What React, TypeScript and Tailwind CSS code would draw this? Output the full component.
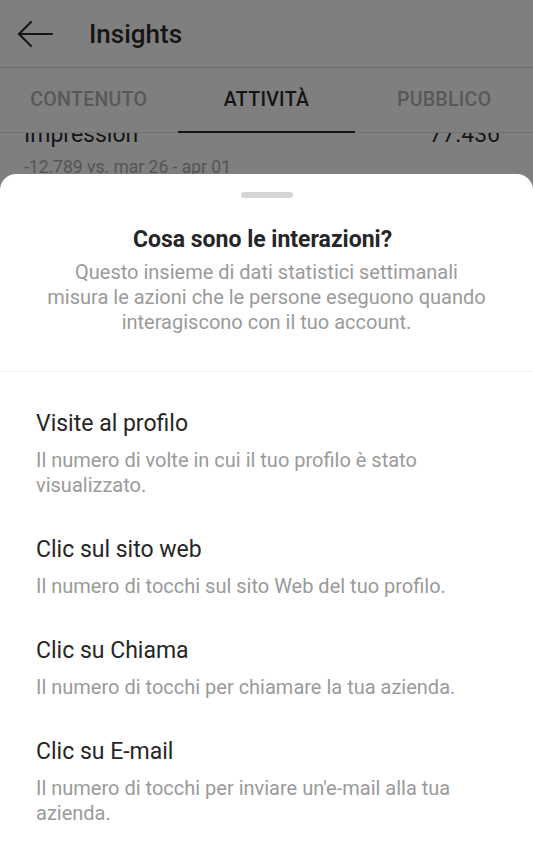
import React from "react";

const items = [
  {
    title: "Visite al profilo",
    lines: ["Il numero di volte in cui il tuo profilo è stato", "visualizzato."],
  },
  {
    title: "Clic sul sito web",
    lines: ["Il numero di tocchi sul sito Web del tuo profilo."],
  },
  {
    title: "Clic su Chiama",
    lines: ["Il numero di tocchi per chiamare la tua azienda."],
  },
  {
    title: "Clic su E-mail",
    lines: ["Il numero di tocchi per inviare un'e-mail alla tua", "azienda."],
  },
];

export default function App() {
  return (
    <div
      className="w-[533px] h-[850px] bg-[#7f7f7f] flex flex-col overflow-hidden"
      style={{ fontFamily: "Roboto, 'Noto Sans', sans-serif" }}
    >
      {/* Header */}
      <div className="h-[68px] flex items-center shrink-0 border-b border-[#6c6c6c]">
        <svg
          className="ml-[17px] w-[36px] h-[28px]"
          viewBox="0 0 36 28"
          fill="none"
          stroke="#151515"
          strokeWidth="2"
          strokeLinecap="round"
          strokeLinejoin="round"
        >
          <path d="M35 14H2" />
          <path d="M14 2L2 14L14 26" />
        </svg>
        <span className="ml-[36px] text-[26px] font-medium text-[#151515] leading-none">Insights</span>
      </div>

      {/* Tabs */}
      <div className="h-[65px] grid grid-cols-3 shrink-0 border-b border-[#727272]">
        <div className="flex items-center justify-center text-[19.5px] font-medium text-[#585858] tracking-[0.3px]">
          CONTENUTO
        </div>
        <div className="relative flex items-center justify-center text-[19.5px] font-medium text-[#141414] tracking-[0.3px]">
          ATTIVITÀ
          <div className="absolute left-0 right-0 bottom-[-1px] h-[2px] bg-[#141414]" />
        </div>
        <div className="flex items-center justify-center text-[19.5px] font-medium text-[#585858] tracking-[0.3px]">
          PUBBLICO
        </div>
      </div>

      {/* Underlying content strip */}
      <div className="h-[41px] overflow-hidden shrink-0 px-[24px]">
        <div className="flex justify-between items-end mt-[-12px] text-[23px] leading-[27px] text-[#161616]">
          <span>Impression</span>
          <span className="mr-[9px]">77.436</span>
        </div>
        <div className="mt-[9px] text-[17.5px] leading-[20px] text-[#555555]">-12.789 vs. mar 26 - apr 01</div>
      </div>

      {/* Bottom sheet */}
      <div className="flex-1 bg-white rounded-t-[16px] flex flex-col">
        <div className="mt-[18px] mx-auto w-[52px] h-[6px] rounded-full bg-[#d6d6d6]" />
        <div className="mt-[28px] text-center text-[23px] leading-[27px] font-bold text-[#262626] pr-[8px]">
          Cosa sono le interazioni?
        </div>
        <div className="mt-[7px] text-center text-[20px] leading-[25px] text-[#9a9a9a]">
          Questo insieme di dati statistici settimanali
          <br />
          misura le azioni che le persone eseguono quando
          <br />
          interagiscono con il tuo account.
        </div>
        <div className="mt-[36px] h-px bg-[#efefef]" />
        <div className="px-[36px] flex flex-col">
          {items.map((it) => (
            <div key={it.title} className="pt-[38px] flex flex-col gap-[11px]">
              <div className="text-[23px] leading-[27px] text-[#262626]">{it.title}</div>
              <div className="text-[20px] leading-[25px] text-[#9a9a9a]">
                {it.lines.map((l, i) => (
                  <React.Fragment key={i}>
                    {i > 0 && <br />}
                    {l}
                  </React.Fragment>
                ))}
              </div>
            </div>
          ))}
        </div>
      </div>
    </div>
  );
}
